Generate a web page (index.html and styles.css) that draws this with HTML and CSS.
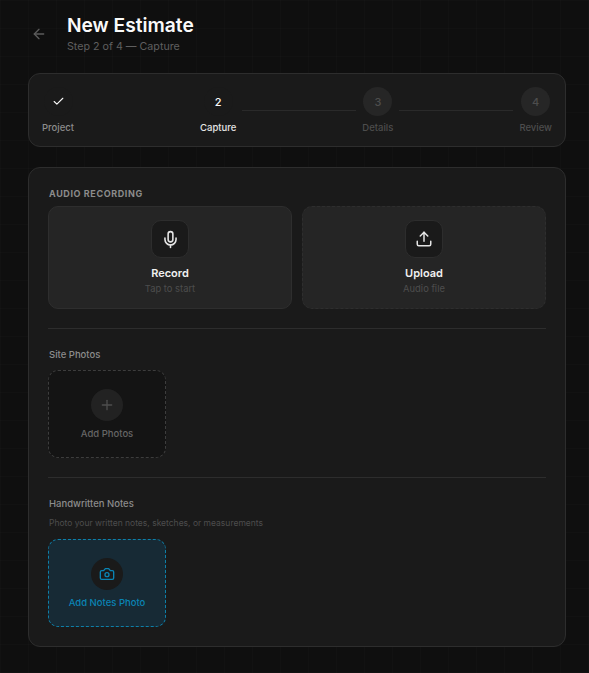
FILE: index.html
```html
<!DOCTYPE html>
<html lang="en">
<head>
<meta charset="utf-8">
<title>New Estimate</title>
<link rel="stylesheet" href="styles.css">
</head>
<body>
<main class="page">
  <header class="head">
    <button class="back" aria-label="Back">
      <svg viewBox="0 0 24 24" width="16" height="16" fill="none" stroke="currentColor" stroke-width="2" stroke-linecap="round" stroke-linejoin="round"><path d="M19 12H5"/><path d="M12 19l-7-7 7-7"/></svg>
    </button>
    <div>
      <h1>New Estimate</h1>
      <p class="sub">Step 2 of 4 — Capture</p>
    </div>
  </header>

  <section class="card stepper">
    <div class="step done">
      <span class="dot"><svg viewBox="0 0 24 24" width="13" height="13" fill="none" stroke="currentColor" stroke-width="2" stroke-linecap="round" stroke-linejoin="round"><path d="M20 6 9 17l-5-5"/></svg></span>
      <span class="lbl">Project</span>
    </div>
    <i class="conn hidden"></i>
    <div class="step cur"><span class="dot">2</span><span class="lbl">Capture</span></div>
    <i class="conn"></i>
    <div class="step"><span class="dot">3</span><span class="lbl">Details</span></div>
    <i class="conn"></i>
    <div class="step"><span class="dot">4</span><span class="lbl">Review</span></div>
  </section>

  <section class="card main">
    <h2>AUDIO RECORDING</h2>
    <div class="audio">
      <button class="tile">
        <span class="ico"><svg viewBox="0 0 24 24" width="19" height="19" fill="none" stroke="currentColor" stroke-width="2" stroke-linecap="round" stroke-linejoin="round"><path d="M12 2a3 3 0 0 0-3 3v7a3 3 0 0 0 6 0V5a3 3 0 0 0-3-3Z"/><path d="M19 10v2a7 7 0 0 1-14 0v-2"/><path d="M12 19v3"/></svg></span>
        <strong>Record</strong>
        <small>Tap to start</small>
      </button>
      <button class="tile dashed">
        <span class="ico"><svg viewBox="0 0 24 24" width="18" height="18" fill="none" stroke="currentColor" stroke-width="2" stroke-linecap="round" stroke-linejoin="round"><path d="M21 15v4a2 2 0 0 1-2 2H5a2 2 0 0 1-2-2v-4"/><path d="M17 8l-5-5-5 5"/><path d="M12 3v12"/></svg></span>
        <strong>Upload</strong>
        <small>Audio file</small>
      </button>
    </div>
    <hr>
    <h3>Site Photos</h3>
    <button class="add">
      <span class="round"><svg viewBox="0 0 24 24" width="16" height="16" fill="none" stroke="currentColor" stroke-width="2" stroke-linecap="round"><path d="M5 12h14"/><path d="M12 5v14"/></svg></span>
      <span>Add Photos</span>
    </button>
    <hr class="second">
    <h3>Handwritten Notes</h3>
    <p class="hint">Photo your written notes, sketches, or measurements</p>
    <button class="add notes">
      <span class="round"><svg viewBox="0 0 24 24" width="16" height="16" fill="none" stroke="currentColor" stroke-width="2" stroke-linecap="round" stroke-linejoin="round"><path d="M14.5 4h-5L7 7H4a2 2 0 0 0-2 2v9a2 2 0 0 0 2 2h16a2 2 0 0 0 2-2V9a2 2 0 0 0-2-2h-3l-2.5-3Z"/><circle cx="12" cy="13" r="3"/></svg></span>
      <span>Add Notes Photo</span>
    </button>
  </section>
</main>
</body>
</html>
```
FILE: styles.css
```css
* { box-sizing: border-box; }
html, body { margin: 0; height: 100%; }
body {
  font-family: Inter, "Liberation Sans", sans-serif;
  background-color: #0f0f0f;
  background-image:
    linear-gradient(to right, rgba(255,255,255,0.01) 1px, transparent 1px),
    linear-gradient(to bottom, rgba(255,255,255,0.01) 1px, transparent 1px);
  background-size: 28px 28px;
  color: #fafafa;
  overflow: hidden;
}
button { font: inherit; padding: 0; cursor: pointer; }
.page { padding: 14px 23px 0 28px; }
.head { display: flex; align-items: center; gap: 20px; height: 39px; margin-bottom: 20px; }
.back { background: none; border: 0; color: #5c5c5c; display: flex; margin-left: 3px; }
h1 { margin: 0; font-size: 19.2px; line-height: 24px; font-weight: 600; }
.sub { margin: 3px 0 0; font-size: 10.7px; line-height: 14px; color: #5f5f5f; }
.card { background: #1a1a1a; border: 1px solid #2d2d2d; border-radius: 12px; }
.stepper { display: flex; align-items: center; padding: 13px 13px 12px; margin-bottom: 20px; }
.step { display: flex; flex-direction: column; align-items: center; gap: 5px; }
.dot { width: 29px; height: 29px; border-radius: 50%; display: flex; align-items: center; justify-content: center; background: #262626; color: #4d4d4d; font-size: 11px; font-weight: 500; }
.lbl { font-size: 9.5px; line-height: 13px; font-weight: 500; color: #4d4d4d; }
.done .dot { background: #1a1a1a; color: #fafafa; }
.done .lbl { color: #8c8c8c; }
.cur .dot { background: #1a1a1a; color: #fafafa; }
.cur .lbl { color: #e5e5e5; }
.conn { flex: 1; height: 1px; margin: 0 6px; background: #2a2a2a; }
.conn.hidden { background: transparent; }
.main { padding: 19px 19px 19px; height: 480px; }
h2 { margin: 0 0 6px; padding-left: 1px; font-size: 9px; line-height: 13px; font-weight: 700; letter-spacing: .6px; color: #8c8c8c; }
.audio { display: grid; grid-template-columns: 1fr 1fr; gap: 10px; }
.tile { height: 103px; background: #252525; border: 1px solid #2e2e2e; border-radius: 10px; color: #f0f0f0; display: flex; flex-direction: column; align-items: center; padding-top: 13px; }
.tile.dashed { border-style: dashed; }
.ico { width: 38px; height: 38px; border-radius: 10px; background: #1a1a1a; border: 1px solid #2d2d2d; display: flex; align-items: center; justify-content: center; color: #e5e5e5; }
.tile strong { font-size: 11px; line-height: 14px; font-weight: 600; margin-top: 8px; }
.tile small { font-size: 9.4px; line-height: 12px; color: #4d4d4d; margin-top: 3px; }
hr { border: 0; height: 1px; background: #2d2d2d; margin: 19px 0 20px; }
hr.second { margin: 19px 0 20px; }
h3 { margin: 0 0 9px; padding-left: 1px; font-size: 9.5px; line-height: 12px; font-weight: 500; color: #8c8c8c; }
.hint { margin: -2px 0 10px; padding-left: 1px; font-size: 8.5px; line-height: 12px; color: #4d4d4d; }
.add { width: 118px; height: 88px; background: #141414; border: 1px dashed #3d3d3d; border-radius: 10px; display: flex; flex-direction: column; align-items: center; padding-top: 18px; gap: 6px; color: #666; font-size: 9.5px; line-height: 14px; font-weight: 500; }
.round { width: 32px; height: 32px; border-radius: 50%; background: #222; display: flex; align-items: center; justify-content: center; color: #4d4d4d; }
.notes { background: #172a35; border-color: #0e7fa8; color: #0a84b4; }
.notes .round { background: #1a1a1a; color: #0a84b4; }
```
